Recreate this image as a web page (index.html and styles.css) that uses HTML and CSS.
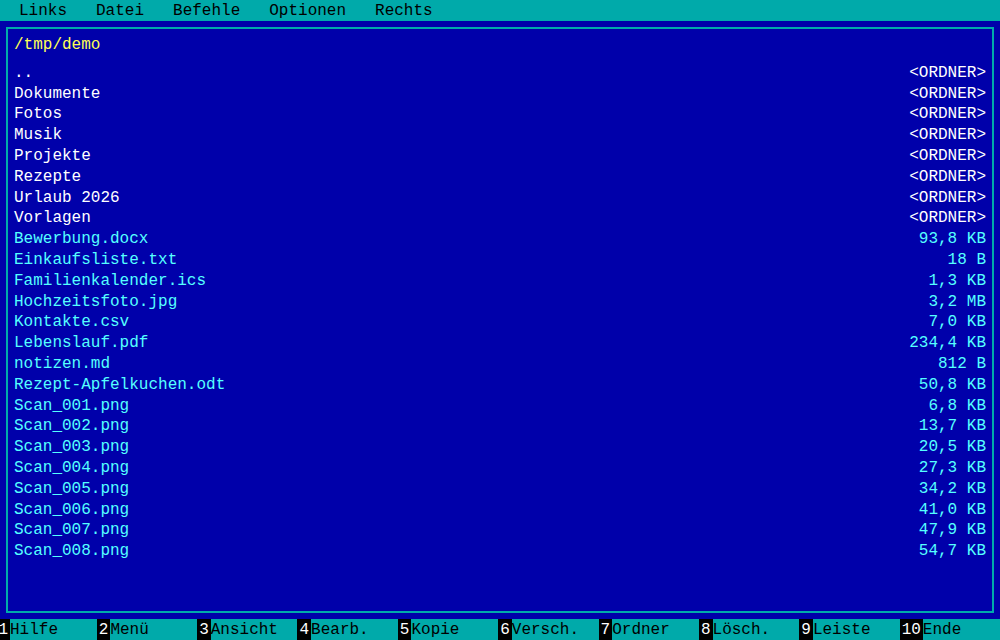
FILE: index.html
```html
<!DOCTYPE html>
<html lang="de">
<head>
    <meta charset="UTF-8">
    <meta name="viewport" content="width=device-width, initial-scale=1.0">
    <title>Dateimanager</title>
    <link rel="stylesheet" href="styles.css">
</head>
<body>
    <nav class="menu-bar">
        <span class="menu-item">Links</span>
        <span class="menu-item">Datei</span>
        <span class="menu-item">Befehle</span>
        <span class="menu-item">Optionen</span>
        <span class="menu-item">Rechts</span>
    </nav>

    <main class="panel">
        <div class="panel-path">/tmp/demo</div>
        <ul class="file-list">
            <li class="entry dir"><span>..</span><span>&lt;ORDNER&gt;</span></li>
            <li class="entry dir"><span>Dokumente</span><span>&lt;ORDNER&gt;</span></li>
            <li class="entry dir"><span>Fotos</span><span>&lt;ORDNER&gt;</span></li>
            <li class="entry dir"><span>Musik</span><span>&lt;ORDNER&gt;</span></li>
            <li class="entry dir"><span>Projekte</span><span>&lt;ORDNER&gt;</span></li>
            <li class="entry dir"><span>Rezepte</span><span>&lt;ORDNER&gt;</span></li>
            <li class="entry dir"><span>Urlaub 2026</span><span>&lt;ORDNER&gt;</span></li>
            <li class="entry dir"><span>Vorlagen</span><span>&lt;ORDNER&gt;</span></li>
            <li class="entry file"><span>Bewerbung.docx</span><span>93,8 KB</span></li>
            <li class="entry file"><span>Einkaufsliste.txt</span><span>18 B</span></li>
            <li class="entry file"><span>Familienkalender.ics</span><span>1,3 KB</span></li>
            <li class="entry file"><span>Hochzeitsfoto.jpg</span><span>3,2 MB</span></li>
            <li class="entry file"><span>Kontakte.csv</span><span>7,0 KB</span></li>
            <li class="entry file"><span>Lebenslauf.pdf</span><span>234,4 KB</span></li>
            <li class="entry file"><span>notizen.md</span><span>812 B</span></li>
            <li class="entry file"><span>Rezept-Apfelkuchen.odt</span><span>50,8 KB</span></li>
            <li class="entry file"><span>Scan_001.png</span><span>6,8 KB</span></li>
            <li class="entry file"><span>Scan_002.png</span><span>13,7 KB</span></li>
            <li class="entry file"><span>Scan_003.png</span><span>20,5 KB</span></li>
            <li class="entry file"><span>Scan_004.png</span><span>27,3 KB</span></li>
            <li class="entry file"><span>Scan_005.png</span><span>34,2 KB</span></li>
            <li class="entry file"><span>Scan_006.png</span><span>41,0 KB</span></li>
            <li class="entry file"><span>Scan_007.png</span><span>47,9 KB</span></li>
            <li class="entry file"><span>Scan_008.png</span><span>54,7 KB</span></li>
        </ul>
    </main>

    <footer class="key-bar">
        <div class="key"><span class="key-num">1</span>Hilfe</div>
        <div class="key"><span class="key-num">2</span>Menü</div>
        <div class="key"><span class="key-num">3</span>Ansicht</div>
        <div class="key"><span class="key-num">4</span>Bearb.</div>
        <div class="key"><span class="key-num">5</span>Kopie</div>
        <div class="key"><span class="key-num">6</span>Versch.</div>
        <div class="key"><span class="key-num">7</span>Ordner</div>
        <div class="key"><span class="key-num">8</span>Lösch.</div>
        <div class="key"><span class="key-num">9</span>Leiste</div>
        <div class="key"><span class="key-num">10</span>Ende</div>
    </footer>
</body>
</html>
```

FILE: styles.css
```css
html, body {
    height: 100%;
}

body {
    margin: 0;
    display: flex;
    flex-direction: column;
    overflow: hidden;
    background-color: #0000aa;
    font-family: 'Liberation Mono', 'DejaVu Sans Mono', monospace;
    font-size: 16px;
    color: #ffffff;
}

.menu-bar {
    display: flex;
    gap: 29px;
    box-sizing: border-box;
    height: 21px;
    padding: 1px 0 0 19px;
    line-height: 21px;
    background-color: #00aaaa;
    color: #000000;
}

.panel {
    flex: 1;
    margin: 6px;
    padding: 6px 6px 4px;
    border: 2px solid #00aaaa;
    line-height: 20.8px;
}

.panel-path {
    color: #ffff55;
    margin-bottom: 7px;
}

.file-list {
    list-style: none;
    margin: 0;
    padding: 0;
}

.entry {
    display: flex;
    justify-content: space-between;
    white-space: pre;
}

.dir {
    color: #ffffff;
}

.file {
    color: #55ffff;
}

/* function keys: ten equal slots, the first one tucked a little past the left edge */
.key-bar {
    display: grid;
    grid-template-columns: repeat(10, 1fr);
    flex-shrink: 0;
    height: 21px;
    margin-left: -3.6px;
    line-height: 20px;
    overflow: hidden;
    background-color: #00aaaa;
    color: #000000;
}

.key {
    white-space: nowrap;
}

.key-num {
    display: inline-block;
    padding: 1px 2px 0;
    background-color: #000000;
    color: #ffffff;
}
```
